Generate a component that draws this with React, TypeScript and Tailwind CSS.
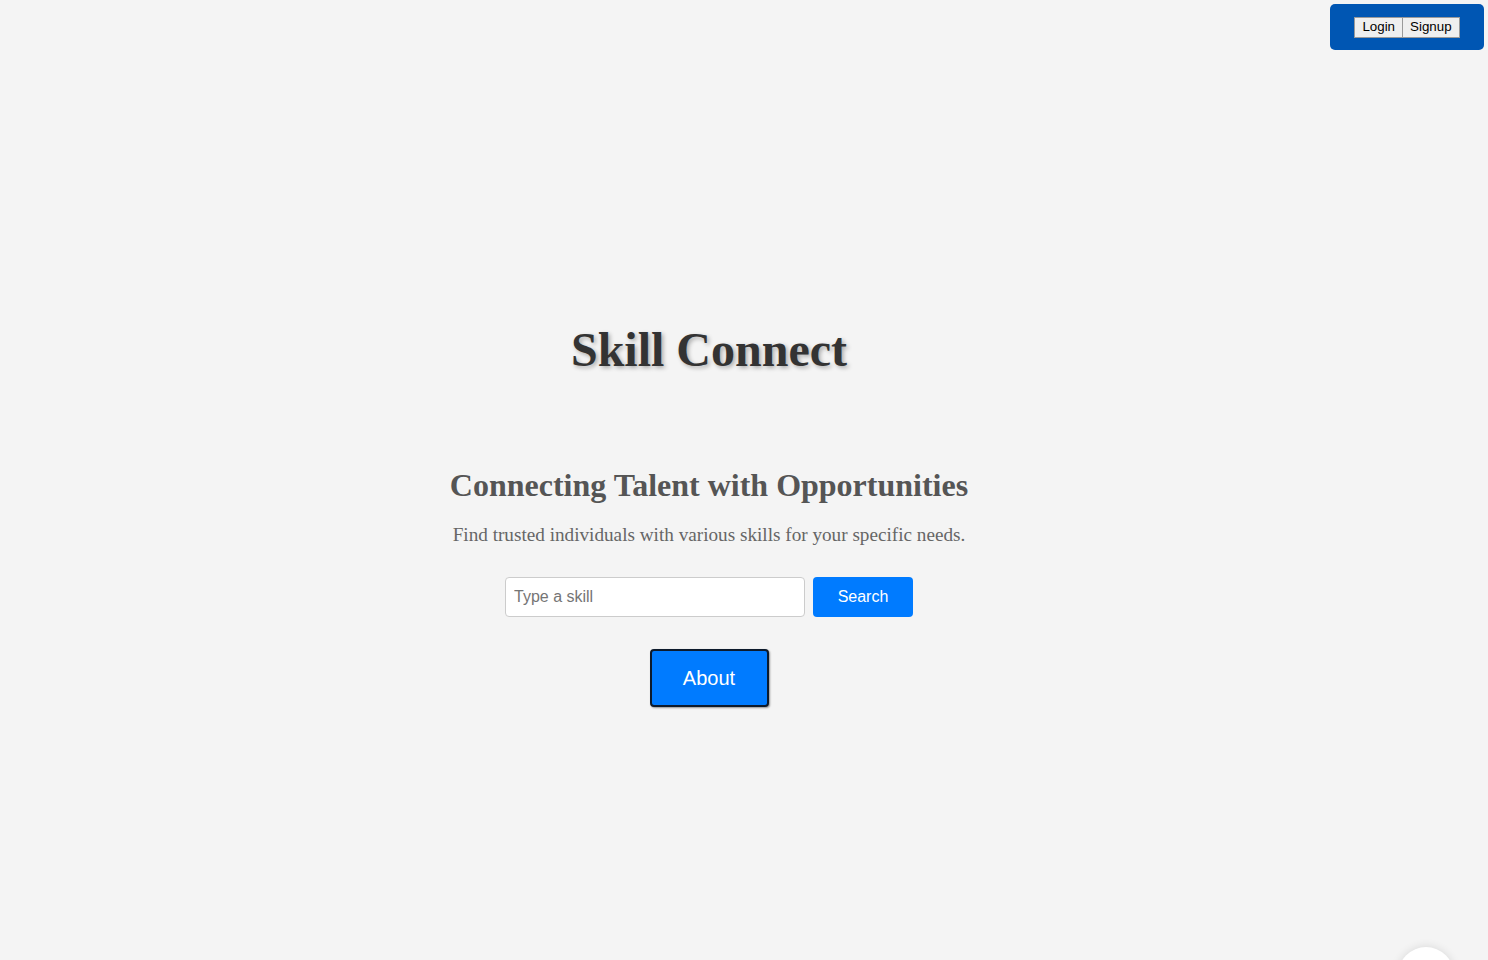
import React from "react";

const serif = "font-['Liberation_Serif','Times_New_Roman',serif]";
const sans = "font-['Liberation_Sans',Arial,sans-serif]";

const Header = () => (
  <div className="flex justify-end pt-1 pr-1">
    <div className="flex h-[46px] w-[154px] items-center justify-center rounded-[5px] bg-[#0056b3]">
      <button
        className={`${sans} h-[21px] border border-[#9a9a9a] bg-[#efefef] px-[7px] text-[13.33px] leading-none text-black`}
      >
        Login
      </button>
      <button
        className={`${sans} h-[21px] border border-[#9a9a9a] border-l-0 bg-[#efefef] px-[7px] text-[13.33px] leading-none text-black`}
      >
        Signup
      </button>
    </div>
  </div>
);

const App = () => {
  const [skill, setSkill] = React.useState("");

  return (
    <div className="relative h-[960px] w-full overflow-hidden bg-[#f4f4f4]">
      <Header />

      <div className="flex w-[1418px] flex-col items-center pt-[276px]">
        <h1
          className={`${serif} text-[48px] font-bold leading-none text-[#333] [text-shadow:2px_2px_4px_rgba(0,0,0,0.3)]`}
        >
          Skill Connect
        </h1>

        <h2
          className={`${serif} mt-[95px] text-[32px] font-bold leading-none text-[#555]`}
        >
          Connecting Talent with Opportunities
        </h2>
        <p className={`${serif} mt-[24px] text-[19.2px] leading-none text-[#666]`}>
          Find trusted individuals with various skills for your specific needs.
        </p>

        <div className="mt-[33px] flex gap-2">
          <input
            value={skill}
            onChange={(e) => setSkill(e.target.value)}
            placeholder="Type a skill"
            className={`${sans} h-[40px] w-[300px] rounded-[4px] border border-[#ccc] bg-white px-2 text-[16px] text-[#333] placeholder:text-[#757575] outline-none`}
          />
          <button
            className={`${sans} h-[40px] w-[100px] rounded-[4px] bg-[#007bff] text-[16px] text-white`}
          >
            Search
          </button>
        </div>

        <button
          className={`${sans} mt-[32px] h-[58px] w-[119px] rounded-[4px] border-2 border-[#0d1a2b] bg-[#007bff] text-[20px] text-white shadow-[1px_1px_2px_rgba(0,0,0,0.4)]`}
        >
          About
        </button>
      </div>

      {/* chat bubble peeking from the bottom edge */}
      <div className="absolute left-[1398px] top-[947px] h-[56px] w-[56px] rounded-full bg-white shadow-[0_0_10px_rgba(0,0,0,0.12)]" />
    </div>
  );
};

export default App;
